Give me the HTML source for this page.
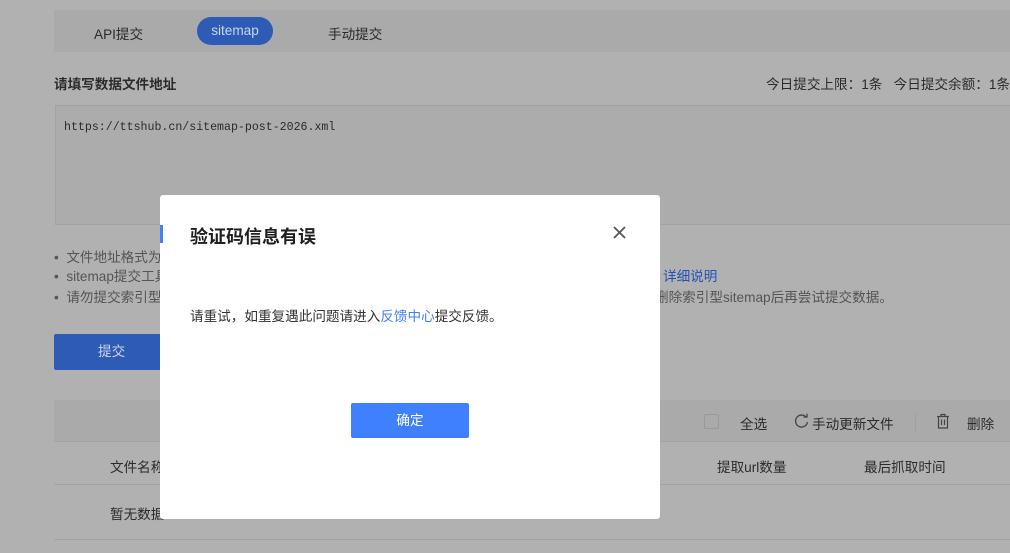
<!DOCTYPE html>
<html><head><meta charset="utf-8"><style>
*{margin:0;padding:0;box-sizing:border-box}
body{width:1010px;height:553px;overflow:hidden;background:#b1b1b1;font-family:"Liberation Sans","Noto Sans CJK SC",sans-serif;position:relative;color:#2b2b2b}
.a{position:absolute;white-space:nowrap}
.t{font-size:13.6px}
</style></head><body>
<div class="a" style="left:54px;top:10px;width:956px;height:42px;background:#aaaaaa"></div>
<div class="a t" style="left:94px;top:23px;color:#2b2b2b">API提交</div>
<div class="a t" style="left:197px;top:17px;width:76px;height:28px;border-radius:14px;background:#2d5bb5;color:#c9d5ee;text-align:center;line-height:28px">sitemap</div>
<div class="a t" style="left:328px;top:23px">手动提交</div>
<div class="a t" style="left:54px;top:73px;font-weight:bold">请填写数据文件地址</div>
<div class="a t" style="right:0;top:73px">今日提交上限：1条&nbsp;&nbsp;&nbsp;今日提交余额：1条</div>
<div class="a" style="left:55px;top:105px;width:960px;height:120px;background:#acacac;border:1px solid #a2a2a2"></div>
<div class="a" style="left:64px;top:121px;font-family:'Liberation Mono',monospace;font-size:11.6px;color:#2b2b2b">https://ttshub.cn/sitemap-post-2026.xml</div>
<div class="a t" style="left:54px;top:246px;color:#555">•&nbsp;&nbsp;文件地址格式为</div>
<div class="a t" style="left:54px;top:265px;color:#555">•&nbsp;&nbsp;sitemap提交工具</div>
<div class="a t" style="left:54px;top:286px;color:#555">•&nbsp;&nbsp;请勿提交索引型</div>
<div class="a t" style="left:663px;top:265px;color:#2550b8">详细说明</div>
<div class="a t" style="left:655px;top:286px;color:#555">删除索引型sitemap后再尝试提交数据。</div>
<div class="a t" style="left:54px;top:334px;width:110px;height:36px;background:#2d5bb5;border-radius:2px;color:#c9d5ee;line-height:36px;padding-left:44px">提交</div>
<div class="a" style="left:54px;top:400px;width:956px;height:42px;background:#aaaaaa;border-bottom:1px solid #a3a3a3"></div>
<div class="a" style="left:704px;top:414px;width:15px;height:15px;border:1px solid #999;border-radius:2px"></div>
<div class="a t" style="left:740px;top:413px">全选</div>
<svg class="a" style="left:794px;top:413px" width="16" height="16" viewBox="0 0 16 16"><path d="M12 4A6 6 0 1 0 13.5 9" fill="none" stroke="#444" stroke-width="1.3"/><path d="M9.5 4H13V0.8" fill="none" stroke="#444" stroke-width="1.3"/></svg>
<div class="a t" style="left:812px;top:413px">手动更新文件</div>
<div class="a" style="left:915px;top:412px;width:1px;height:20px;background:#a0a0a0"></div>
<svg class="a" style="left:936px;top:413px" width="14" height="16" viewBox="0 0 14 16"><path d="M1 3.5H13M5 3.5V1.5H9V3.5M2.5 3.5V15H11.5V3.5M5.5 6.5V12M8.5 6.5V12" fill="none" stroke="#444" stroke-width="1.2"/></svg>
<div class="a t" style="left:967px;top:413px">删除</div>
<div class="a t" style="left:110px;top:456px">文件名称</div>
<div class="a t" style="left:717px;top:456px">提取url数量</div>
<div class="a t" style="left:864px;top:456px">最后抓取时间</div>
<div class="a" style="left:54px;top:484px;width:956px;height:1px;background:#a3a3a3"></div>
<div class="a t" style="left:110px;top:503px">暂无数据</div>
<div class="a" style="left:54px;top:539px;width:956px;height:1px;background:#a3a3a3"></div>

<div class="a" style="left:160px;top:195px;width:500px;height:324px;background:#fff;border-radius:3px"></div>
<div class="a" style="left:160px;top:225px;width:3px;height:18px;background:#3f80fe"></div>
<div class="a" style="left:190px;top:223px;font-size:18px;font-weight:bold;color:#1f1f1f">验证码信息有误</div>
<svg class="a" style="left:613px;top:226px" width="13" height="13" viewBox="0 0 13 13"><path d="M1 1L12 12M12 1L1 12" stroke="#555" stroke-width="1.8"/></svg>
<div class="a t" style="left:190px;top:305px;color:#333">请重试，如重复遇此问题请进入<span style="color:#3f80fe">反馈中心</span>提交反馈。</div>
<div class="a t" style="left:351px;top:403px;width:118px;height:35px;background:#3f80fe;border-radius:2px;color:#fff;text-align:center;line-height:35px">确定</div>
</body></html>
